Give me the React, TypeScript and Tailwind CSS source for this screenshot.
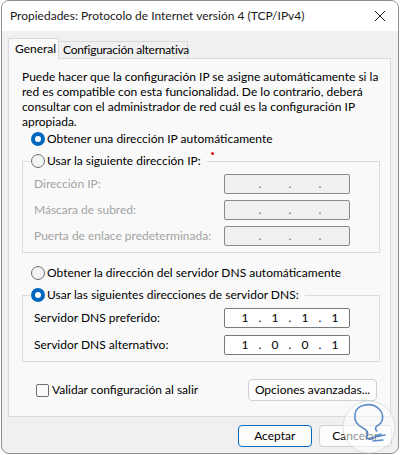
import React from "react";

function Radio({ checked }: { checked?: boolean }) {
  return checked ? (
    <span className="inline-block w-[14px] h-[14px] rounded-full border-[4px] border-[#0067c0] bg-white shrink-0" />
  ) : (
    <span className="inline-block w-[14px] h-[14px] rounded-full border border-[#6e6e6e] bg-[#f3f3f3] shrink-0" />
  );
}

function IpBox({ values, disabled }: { values?: string[]; disabled?: boolean }) {
  const v = values ?? ["", "", "", ""];
  return (
    <div
      className={
        disabled
          ? "w-[126px] h-[20px] rounded-[2px] border border-[#8a8a8a] bg-[#f0f0f0] flex items-center pl-[10px] text-[#6a6a6a]"
          : "w-[126px] h-[20px] rounded-[2px] border border-[#7a7a7a] bg-white flex items-center pl-[10px] text-black"
      }
    >
      {v.map((o, i) => (
        <React.Fragment key={i}>
          <span className="w-[20px] text-center leading-[18px]">{o}</span>
          {i < 3 && <span className="w-[10px] text-center leading-[18px]">.</span>}
        </React.Fragment>
      ))}
    </div>
  );
}

export default function App() {
  return (
    <div className="w-[400px] h-[455px] bg-white relative font-['Lato',sans-serif] text-[12px] text-black whitespace-nowrap">
      <div className="ml-[1px] w-[398px] h-[454px] border border-[#8f8f8f] rounded-[8px] overflow-hidden flex flex-col bg-[#f0f0f0]">
        {/* title bar */}
        <div className="h-[30px] bg-white flex items-center pl-[8px] shrink-0">
          <span className="leading-[16px] text-[#1a1a1a]">Propiedades: Protocolo de Internet versión 4 (TCP/IPv4)</span>
          <svg className="ml-auto mr-[12px]" width="12" height="12" viewBox="0 0 12 12">
            <path d="M1 1 L11 11 M11 1 L1 11" stroke="#1a1a1a" strokeWidth="1" />
          </svg>
        </div>
        {/* body */}
        <div className="flex-1 px-[6px] pt-[7px] flex flex-col">
          {/* tabs */}
          <div className="flex items-end h-[20px]">
            <div className="h-[21px] w-[51px] -mb-[1px] relative z-10 border-l border-t border-r border-[#d9d9d9] bg-[#f9f9f9] flex items-center pl-[6px] leading-[16px]">
              General
            </div>
            <div className="h-[17px] w-[129px] border-t border-r border-[#d9d9d9] bg-[#f0f0f0] flex items-center pl-[4px] leading-[16px] tracking-[-0.25px]">
              Configuración alternativa
            </div>
          </div>
          {/* panel */}
          <div className="relative w-[383px] h-[359px] border border-[#d9d9d9] bg-[#f9f9f9] flex flex-col">
            <div className="mt-[10px] ml-[13px] leading-[15px]">
              <div>Puede hacer que la configuración IP se asigne automáticamente si la</div>
              <div>red es compatible con esta funcionalidad. De lo contrario, deberá</div>
              <div>consultar con el administrador de red cuál es la configuración IP</div>
              <div>apropiada.</div>
            </div>
            <div className="mt-[2px] ml-[22px] h-[16px] flex items-center gap-[2px] leading-[16px]">
              <Radio checked />
              <span>Obtener una dirección IP automáticamente</span>
            </div>
            <fieldset className="mt-[5px] ml-[13px] w-[358px] border border-[#dcdcdc] px-0 pb-[6px]">
              <legend className="ml-[7px] pl-[1px] pr-[6px] h-[18px] flex items-center gap-[2px] leading-[16px]">
                <Radio />
                <span>Usar la siguiente dirección IP:</span>
              </legend>
              <div className="flex flex-col gap-[6px] pt-[4px] pl-[11px] text-[#a3a3a3]">
                <div className="flex items-center h-[20px]">
                  <span className="w-[190px]">Dirección IP:</span>
                  <IpBox disabled />
                </div>
                <div className="flex items-center h-[20px]">
                  <span className="w-[190px]">Máscara de subred:</span>
                  <IpBox disabled />
                </div>
                <div className="flex items-center h-[20px]">
                  <span className="w-[190px]">Puerta de enlace predeterminada:</span>
                  <IpBox disabled />
                </div>
              </div>
            </fieldset>
            <div className="mt-[12px] ml-[22px] h-[16px] flex items-center gap-[2px] leading-[16px]">
              <Radio />
              <span>Obtener la dirección del servidor DNS automáticamente</span>
            </div>
            <fieldset className="mt-[5px] ml-[13px] w-[358px] border border-[#dcdcdc] px-0 pb-[6px]">
              <legend className="ml-[7px] pl-[1px] pr-[6px] h-[18px] flex items-center gap-[2px] leading-[16px]">
                <Radio checked />
                <span>Usar las siguientes direcciones de servidor DNS:</span>
              </legend>
              <div className="flex flex-col gap-[7px] pt-[4px] pl-[11px]">
                <div className="flex items-center h-[20px]">
                  <span className="w-[190px]">Servidor DNS preferido:</span>
                  <IpBox values={["1", "1", "1", "1"]} />
                </div>
                <div className="flex items-center h-[20px]">
                  <span className="w-[190px]">Servidor DNS alternativo:</span>
                  <IpBox values={["1", "0", "0", "1"]} />
                </div>
              </div>
            </fieldset>
            <div className="mt-[17px] ml-[27px] mr-[13px] flex items-center">
              <span className="inline-block w-[13px] h-[13px] rounded-[2px] border border-[#6e6e6e] bg-[#fbfbfb] mt-[1px]" />
              <span className="ml-[3px] leading-[16px]">Validar configuración al salir</span>
              <button className="ml-auto w-[129px] h-[22px] rounded-[4px] border border-[#d0d0d0] bg-[#fdfdfd] leading-[16px]">
                Opciones avanzadas...
              </button>
            </div>
            <span className="absolute left-[202px] top-[93px] w-[3px] h-[3px] rounded-full bg-[#e8141c]" />
          </div>
          {/* buttons */}
          <div className="mt-[8px] flex gap-[7px] pl-[230px]">
            <button className="w-[74px] h-[22px] rounded-[4px] border border-[#0067c0] bg-[#fdfdfd] leading-[16px]">Aceptar</button>
            <button className="w-[74px] h-[22px] rounded-[4px] border border-[#d0d0d0] bg-[#fdfdfd] leading-[16px]">Cancelar</button>
          </div>
        </div>
      </div>
      {/* watermark */}
      <svg className="absolute left-[341px] top-[399px]" width="56" height="56" viewBox="0 0 56 56">
        <circle cx="28" cy="28" r="26" fill="rgba(255,255,255,0.55)" stroke="rgba(200,215,230,0.7)" strokeWidth="1" />
        <path
          d="M14 16 C14 6, 30 2, 38 10 C44 16, 42 24, 36 27 C34 28, 34 31, 36 32 M14 16 C13 22, 16 26, 22 29 C26 31, 28 34, 26 37 C24 39, 28 41, 32 39 L40 35 M34 38 L44 36 M32 42 L42 41"
          fill="none"
          stroke="rgba(50,110,190,0.8)"
          strokeWidth="1.6"
          strokeLinecap="round"
        />
      </svg>
    </div>
  );
}
